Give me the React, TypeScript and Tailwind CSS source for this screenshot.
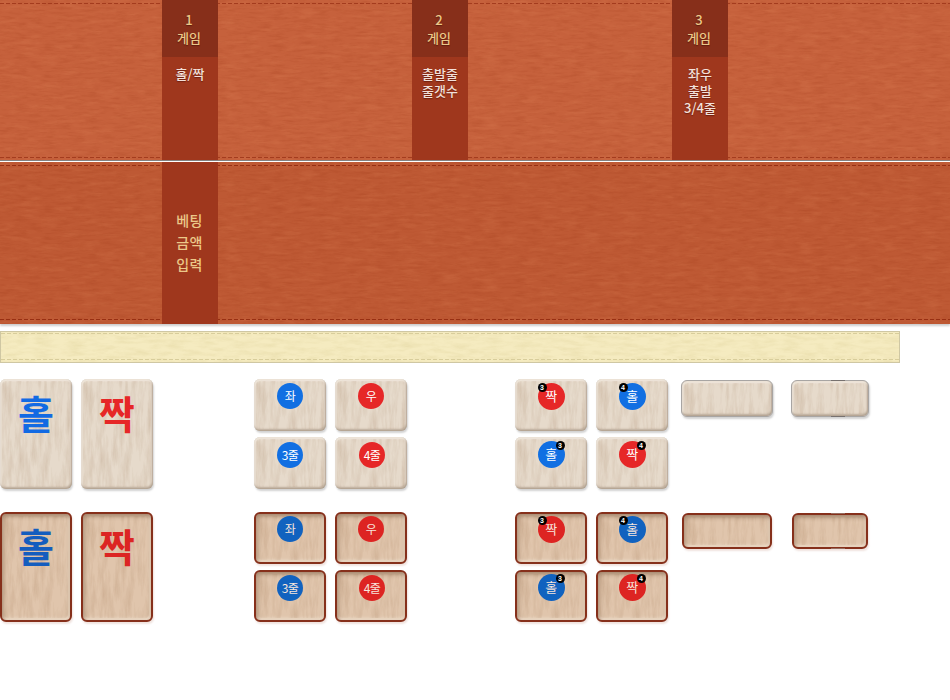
import React from "react";

const KR = "font-['Noto_Sans_CJK_KR',sans-serif]";

function Grain({ id, opacity }: { id: string; opacity: string }) {
  return (
    <svg className={`pointer-events-none absolute inset-0 h-full w-full ${opacity}`} aria-hidden="true">
      <rect width="100%" height="100%" filter={`url(#${id})`} />
    </svg>
  );
}

function Filters() {
  // Turns one noise channel into a light or dark tint of the given colour with varying alpha.
  const tint = (r: number, g: number, b: number, gain: number, cut: number) =>
    `0 0 0 0 ${r} 0 0 0 0 ${g} 0 0 0 0 ${b} ${gain} 0 0 0 ${-cut}`;
  return (
    <svg className="absolute h-0 w-0" aria-hidden="true">
      <filter id="felt-dark" x="0" y="0" width="100%" height="100%" colorInterpolationFilters="sRGB">
        <feTurbulence type="fractalNoise" baseFrequency="0.07 0.4" numOctaves="4" seed="4" />
        <feColorMatrix values={tint(0.55, 0.15, 0.03, 1.6, 0.7)} />
      </filter>
      <filter id="felt-light" x="0" y="0" width="100%" height="100%" colorInterpolationFilters="sRGB">
        <feTurbulence type="fractalNoise" baseFrequency="0.05 0.2" numOctaves="4" seed="11" />
        <feColorMatrix values={tint(1, 0.7, 0.5, 1.6, 0.75)} />
      </filter>
      <filter id="straw" x="0" y="0" width="100%" height="100%" colorInterpolationFilters="sRGB">
        <feTurbulence type="fractalNoise" baseFrequency="0.06 0.25" numOctaves="4" seed="6" />
        <feColorMatrix values={tint(0.75, 0.68, 0.4, 1.6, 0.6)} />
      </filter>
      <filter id="wood" x="0" y="0" width="100%" height="100%" colorInterpolationFilters="sRGB">
        <feTurbulence type="fractalNoise" baseFrequency="0.2 0.03" numOctaves="4" seed="8" />
        <feColorMatrix values={tint(0.5, 0.32, 0.16, 1.6, 0.6)} />
      </filter>
    </svg>
  );
}

function Felt() {
  return (
    <>
      <Grain id="felt-dark" opacity="opacity-20" />
      <Grain id="felt-light" opacity="opacity-15" />
    </>
  );
}

function Stitch({ color }: { color: "red" | "deep" | "straw" }) {
  const tint = {
    red: "bg-[repeating-linear-gradient(90deg,#a43c1e_0_4px,transparent_4px_6px)]",
    deep: "bg-[repeating-linear-gradient(90deg,#982f12_0_4px,transparent_4px_6px)]",
    straw: "bg-[repeating-linear-gradient(90deg,#d8cd9b_0_4px,transparent_4px_6px)]",
  }[color];
  return <div className={`h-px w-full shrink-0 ${tint}`} />;
}

function GameColumn({ no, lines }: { no: string; lines: string }) {
  return (
    <div className="flex h-full w-14 shrink-0 flex-col bg-[#9f371d] text-center">
      <div className="h-[57px] bg-[#872f1a] pt-[11px] pr-[2px] text-[13px] leading-[18px] font-medium whitespace-pre-line text-[#ebc889] [text-shadow:0_1px_1px_#5f1c0c]">
        {no + "\n게임"}
      </div>
      <div className="pt-[8px] text-[13px] leading-[17px] font-medium whitespace-pre-line text-[#f3e0da] [text-shadow:0_1px_1px_#6f2010]">
        {lines}
      </div>
    </div>
  );
}

type Mark = { text: string; tone: "blue" | "red"; badge?: string; side?: "left" | "right"; shift?: string };

function Disc({ mark, pressed }: { mark: Mark; pressed: boolean }) {
  const blue = pressed ? "bg-[#1162bf]" : "bg-[#116fe2]";
  const red = pressed ? "bg-[#dd2422]" : "bg-[#e62727]";
  const size = mark.badge ? "h-[27px] w-[27px] leading-[26px] text-[13px]" : "h-[26px] w-[26px] leading-[25px] text-[12px]";
  return (
    <div
      className={`relative flex shrink-0 justify-center rounded-full font-normal whitespace-nowrap tracking-[-0.5px] ${size} ${
        mark.tone === "blue" ? blue : red
      } ${pressed ? "text-[#f7e5dc]" : "text-white"} ${mark.shift ?? ""}`}
    >
      {mark.text}
      {mark.badge && (
        <span
          className={`absolute top-0 flex h-[9px] w-[9px] items-center justify-center rounded-full bg-black font-['Liberation_Sans',sans-serif] text-[7px] leading-[9px] font-bold tracking-normal text-white ${
            mark.side === "left" ? "left-0" : "right-0"
          }`}
        >
          {mark.badge}
        </span>
      )}
    </div>
  );
}

const RAISED =
  "bg-[#e6dacb] shadow-[1px_2px_2px_rgba(0,0,0,0.18),inset_1px_2px_2px_rgba(250,243,235,0.6),inset_-1px_-2px_2px_rgba(112,88,68,0.35),inset_0_0_2px_rgba(120,100,80,0.4)]";
const PRESSED =
  "border-2 border-[#86301b] bg-[#e0c5ac] shadow-[1px_2px_2px_rgba(150,60,30,0.14),inset_1px_2px_4px_rgba(90,55,30,0.5),inset_-1px_-2px_3px_rgba(255,245,230,0.6)]";

function Tile({ size, pressed, children }: { size: string; pressed: boolean; children?: React.ReactNode }) {
  return (
    <div className={`relative isolate flex shrink-0 justify-center rounded-[6px] ${size} ${pressed ? PRESSED : RAISED}`}>
      <div className="absolute inset-[2px] overflow-hidden rounded-[4px]">
        <Grain id="wood" opacity="opacity-20" />
      </div>
      {children}
    </div>
  );
}

function Block({ marks, pressed }: { marks: Mark[]; pressed: boolean }) {
  return (
    <div className="grid grid-cols-[72px_72px] gap-x-[9px] gap-y-[6px]">
      {marks.map((m, i) => (
        <Tile key={i} size="h-[52px] w-[72px]" pressed={pressed}>
          <div className={pressed ? "mt-[2px]" : "mt-[4px]"}>
            <Disc mark={m} pressed={pressed} />
          </div>
        </Tile>
      ))}
    </div>
  );
}

const LADDER: Mark[] = [
  { text: "좌", tone: "blue" },
  { text: "우", tone: "red" },
  { text: "3줄", tone: "blue", shift: "mt-[1px]" },
  { text: "4줄", tone: "red", shift: "mt-[1px] left-[1px]" },
];

const COMBO: Mark[] = [
  { text: "짝", tone: "red", badge: "3", side: "left" },
  { text: "홀", tone: "blue", badge: "4", side: "left" },
  { text: "홀", tone: "blue", badge: "3", side: "right" },
  { text: "짝", tone: "red", badge: "4", side: "right" },
];

function Blank({ wide, pressed }: { wide: boolean; pressed: boolean }) {
  const w = wide ? (pressed ? "w-[90px]" : "w-[92px]") : pressed ? "w-[76px]" : "w-[78px]";
  const seam = pressed ? "bg-[#966b5d] left-[39px]" : "bg-[#77716f] left-[40px]";
  return (
    <div className="relative">
      <Tile size={`${pressed ? "h-[36px]" : "h-[37px] border border-[#a8a5a3]"} ${w}`} pressed={pressed} />
      {!wide && (
        <>
          <span className={`absolute top-0 h-px w-[14px] ${seam}`} />
          <span className={`absolute bottom-0 h-px w-[14px] ${seam}`} />
        </>
      )}
    </div>
  );
}

function TileRow({ pressed }: { pressed: boolean }) {
  const blue = pressed ? "text-[#145dbe]" : "text-[#126ae3]";
  const red = pressed ? "text-[#dc2523]" : "text-[#e62727]";
  return (
    <div className="flex items-start">
      <div className="flex gap-[9px]">
        {["홀", "짝"].map((t, i) => (
          <Tile key={t} size="h-[110px] w-[72px]" pressed={pressed}>
            <span className={`relative text-[39px] leading-[40px] font-bold ${pressed ? "mt-[11px]" : "mt-[13px]"} ${i ? red : blue}`}>{t}</span>
          </Tile>
        ))}
      </div>
      <div className="ml-[101px]">
        <Block marks={LADDER} pressed={pressed} />
      </div>
      <div className="ml-[108px]">
        <Block marks={COMBO} pressed={pressed} />
      </div>
      <div className={pressed ? "mt-[1px] ml-[14px] flex gap-[20px]" : "mt-[1px] ml-[13px] flex gap-[18px]"}>
        <Blank wide pressed={pressed} />
        <Blank wide={false} pressed={pressed} />
      </div>
    </div>
  );
}

export default function App() {
  return (
    <div className={`h-[700px] w-[950px] overflow-hidden bg-white ${KR}`}>
      <Filters />
      <section className="relative isolate h-[160px] bg-[#c6613c]">
        <Felt />
        <div className="relative flex h-full flex-col justify-between pt-[3px] pb-[2px]">
          <Stitch color="red" />
          <Stitch color="red" />
        </div>
        <div className="absolute inset-0 flex pl-[162px]">
          <GameColumn no="1" lines={"홀/짝"} />
          <div className="w-[194px]" />
          <GameColumn no="2" lines={"출발줄\n줄갯수"} />
          <div className="w-[204px]" />
          <GameColumn no="3" lines={"좌우\n출발\n3/4줄"} />
        </div>
      </section>
      <div className="h-[2px] border-t border-[#83817f] bg-white" />
      <section className="relative isolate h-[162px] bg-[#be5934] shadow-[0_2px_2px_rgba(0,0,0,0.2)]">
        <Felt />
        <div className="relative flex h-full flex-col justify-between pt-[3px] pb-[4px]">
          <Stitch color="deep" />
          <Stitch color="deep" />
        </div>
        <div className="absolute inset-0 flex pl-[162px]">
          <div className="flex w-14 flex-col items-center justify-center bg-[#9f371d] pr-[1px] pb-[3px] text-[14px] leading-[22px] font-medium tracking-[0.3px] text-[#ebc889]">
            <div>베팅</div>
            <div>금액</div>
            <div>입력</div>
          </div>
        </div>
      </section>
      <section className="relative isolate mt-[7px] h-[32px] w-[900px] border border-[#cfc7a3] bg-[#f5ebc0]">
        <Grain id="straw" opacity="opacity-20" />
        <div className="relative flex h-full flex-col justify-between pt-[1px] pb-[2px]">
          <Stitch color="straw" />
          <Stitch color="straw" />
        </div>
      </section>
      <div className="mt-[16px] flex flex-col gap-[23px]">
        <TileRow pressed={false} />
        <TileRow pressed />
      </div>
    </div>
  );
}
